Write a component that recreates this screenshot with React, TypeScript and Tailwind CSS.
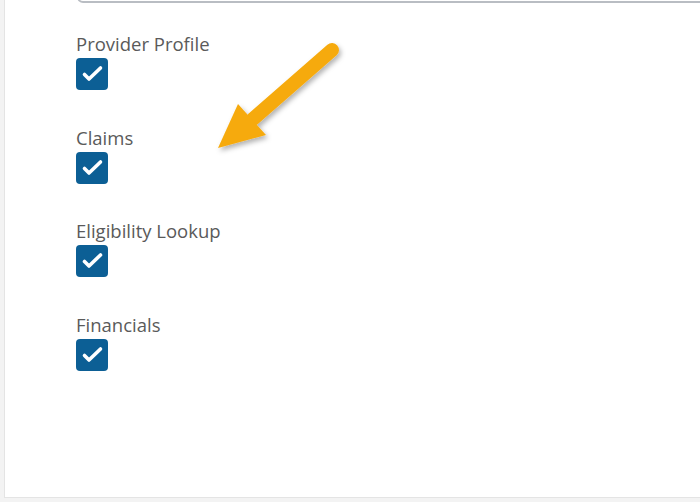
import React from "react";

const items = ["Provider Profile", "Claims", "Eligibility Lookup", "Financials"];

function Check() {
  return (
    <div className="w-[32px] h-[32px] rounded-[4px] bg-[#0c5f95]">
      <svg width="32" height="32" viewBox="0 0 32 32">
        <path d="M8.5 16.5 L13 21 L24.5 10" fill="none" stroke="#fff" strokeWidth="3.6" strokeLinecap="round" strokeLinejoin="round" />
      </svg>
    </div>
  );
}

export default function App() {
  return (
    <div className="w-[700px] h-[502px] bg-[#f3f3f3] pl-[4px] overflow-hidden" style={{ fontFamily: '"Open Sans", sans-serif' }}>
      <div className="relative h-[498px] bg-white border-l border-b border-[#e4e4e4] overflow-hidden">
        <div className="ml-[72px] mt-[-40px] h-[43px] border-2 border-[#b9bdc3] rounded-b-[6px] mr-[-20px]" />
        <div className="pl-[71px] pt-[29px] flex flex-col gap-[35.5px]">
          {items.map((t) => (
            <div key={t} className="flex flex-col gap-[2px]">
              <div className="text-[18.5px] leading-[24px] text-[#5a5a5a]">{t}</div>
              <Check />
            </div>
          ))}
        </div>
        <svg className="absolute left-0 top-0" width="700" height="498" viewBox="0 0 700 498">
          <defs>
            <filter id="sh" x="-20%" y="-20%" width="150%" height="150%">
              <feDropShadow dx="2" dy="3" stdDeviation="2.5" floodColor="#000" floodOpacity="0.3" />
            </filter>
          </defs>
          <g filter="url(#sh)">
            <line x1="327" y1="50" x2="248" y2="119" stroke="#f6aa0d" strokeWidth="14" strokeLinecap="round" />
            <polygon points="213,148 233,104 261,135" fill="#f6aa0d" />
          </g>
        </svg>
      </div>
    </div>
  );
}
